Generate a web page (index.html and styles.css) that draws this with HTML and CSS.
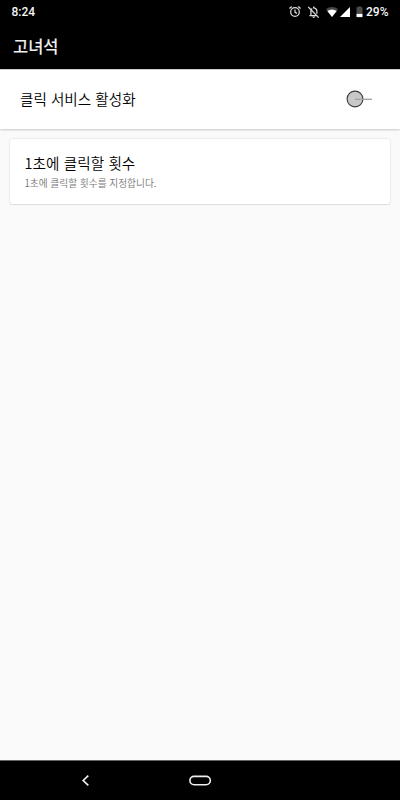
FILE: index.html
```html
<!DOCTYPE html>
<html lang="ko">
<head>
<meta charset="utf-8">
<meta name="viewport" content="width=device-width">
<title>고녀석</title>
<link rel="stylesheet" href="styles.css">
</head>
<body>
<div class="screen">
  <header class="header">
    <div class="status">
      <span class="time">8:24</span>
      <svg class="status-icons" width="76" height="16" viewBox="0 0 76 16" fill="none" aria-hidden="true">
        <g stroke="#ddd" stroke-width="1.25">
          <circle cx="7" cy="8" r="4.3"/>
          <path d="M7 5.500v2.800l2 1.100M1.400 4.400l2.400-2M12.600 4.400l-2.400-2"/>
          <path d="M21.4 11.700h8M22.900 11.500V7.300c0-1.200.5-2.100 1.300-2.700M25.100 4c2-.3 3.800 1 3.800 3.300v2.400M20.300 3l10.400 10.600M25.700 2.400v1.400"/>
        </g>
        <path d="M24.400 12.600h2.600a1.300 1.300 0 0 1-2.600 0z" fill="#ddd"/>
        <path d="M38 5.300C41.200 2.200 46.800 2.200 50 5.300L44 13z" fill="#454545"/>
        <path d="M39.300 7Q44 3.800 48.700 7L44 13z" fill="#fff"/>
        <path d="M52 13L62 3v10z" fill="#fff"/>
        <path d="M68.500 3.300h1.300V2.400h3.400v.9h1.300v6.500h-6z" fill="#4a4a4a"/>
        <path d="M68.500 9.800h6v3.300h-6z" fill="#fff"/>
      </svg>
      <span class="battery">29%</span>
    </div>
    <h1 class="title">고녀석</h1>
  </header>
  <main class="content">
    <section class="service">
      <span class="label">클릭 서비스 활성화</span>
      <span class="toggle" role="switch" aria-checked="false"><svg width="28" height="18" viewBox="0 0 28 18"><circle cx="9" cy="9" r="7.900" fill="#c8c8c8" stroke="#393939" stroke-width="1.100"/><path d="M9 9.300h17" stroke="#a0a0a0" stroke-width="1.300"/></svg></span>
    </section>
    <section class="card">
      <h2 class="label">1초에 클릭할 횟수</h2>
      <p class="description">1초에 클릭할 횟수를 지정합니다.</p>
    </section>
  </main>
  <nav class="navigation">
    <svg class="back" width="10" height="12" viewBox="0 0 10 12" fill="none"><path d="M8.300 .7L3.200 5.500l5.100 4.800" stroke="#eee" stroke-width="1.700"/></svg>
    <svg class="home" width="24" height="12" viewBox="0 0 24 12" fill="none"><rect x="1.900" y="1.400" width="20.400" height="8.300" rx="4.150" stroke="#eee" stroke-width="1.600"/></svg>
  </nav>
</div>
</body>
</html>
```
FILE: styles.css
```css
* { box-sizing: border-box; }
body, h1, h2, p { margin: 0; }
body { font-family: "Noto Sans CJK KR", sans-serif; background: #fafafa; }
.screen { height: 800px; display: flex; flex-direction: column; }
.header { height: 69px; flex: none; background: #000; color: #f5f5f5; }
.status { height: 24px; padding: 0 11.5px; display: flex; align-items: center; font: 500 12px/24px Roboto, sans-serif; }
.time { margin-right: auto; }
.status-icons { margin-right: 2.5px; }
.title { padding-left: 13px; color: #eee; font-size: 16.5px; font-weight: 500; line-height: 45px; }
.content { flex: 1; }
.service { height: 60px; padding: 0 27px 2px 20px; display: flex; align-items: center; justify-content: space-between; background: #fff; border-top: 1px solid #ccc; box-shadow: 0 1px 2px #0003; }
.service .toggle { margin-right: -.5px; }
.label { color: #000; font-size: 14.6px; font-weight: 350; line-height: 22px; }
.toggle { display: flex; }
.card { height: 65px; margin: 10px 10px 0; padding: 13px 14.5px; background: #fff; border-radius: 2px; box-shadow: 0 0 2px #0003, 0 1px 1px #0001; }
.card .label { letter-spacing: .07px; }
.description { color: #757575; font-size: 9.7px; font-weight: 350; line-height: 14px; margin-top: 2px; }
.navigation { height: 40px; flex: none; display: flex; align-items: center; padding-left: 80px; background: #000; border-top: 1px solid #666; }
.home { margin-left: 98px; }
```
